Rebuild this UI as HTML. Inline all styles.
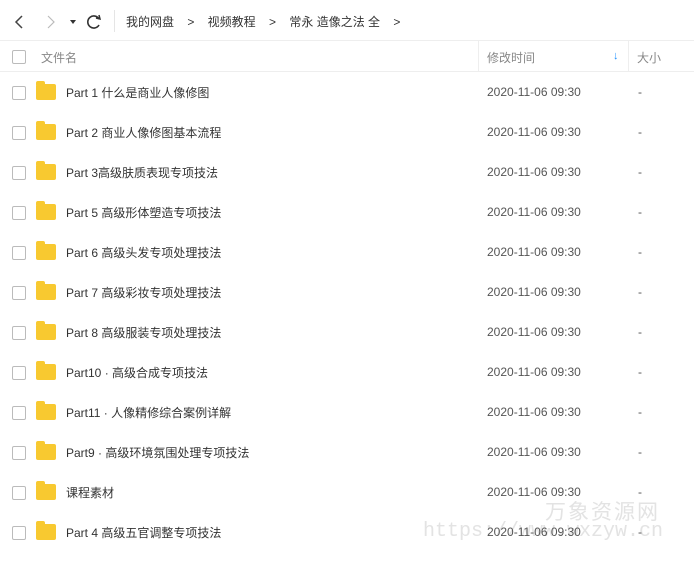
<!DOCTYPE html><html><head><meta charset="utf-8"><style>
body{margin:0;width:694px;height:566px;background:#fff;font-family:"Liberation Sans","Noto Sans CJK SC",sans-serif;position:relative;overflow:hidden;color:#333}
.a{position:absolute}
.cb{position:absolute;left:12px;width:12px;height:12px;border:1px solid #bbb;border-radius:2px;background:#fff}
.row{position:absolute;left:0;width:694px;height:40px}
.row .fd{position:absolute;left:36px;top:12px;width:20px;height:16px;background:#f8c930;border-radius:2px}
.row .fd:before{content:"";position:absolute;left:0;top:-3px;width:9px;height:4px;background:#f8c930;border-radius:2px 2px 0 0}
.row .n{position:absolute;left:66px;top:12px;font-size:12px;color:#333}
.row .t{position:absolute;left:487px;top:13px;font-size:12px;color:#555}
.row .s{position:absolute;left:638px;top:13px;font-size:12px;color:#555}
.row .cb{top:14px}
</style></head><body>
<div class="a" style="left:0;top:40px;width:694px;height:1px;background:#eee"></div>
<div class="a" style="left:0;top:71px;width:694px;height:1px;background:#eee"></div>
<svg class="a" style="left:12px;top:13px" width="90" height="18"><path d="M10 3 L4 9 L10 15" stroke="#444" stroke-width="1.5" fill="none"/><path d="M36 3 L42 9 L36 15" stroke="#bbb" stroke-width="1.2" fill="none"/><path d="M58 7 L64 7 L61 11Z" fill="#333"/><path d="M87 6 A6 6 0 1 0 87 12" stroke="#333" stroke-width="1.6" fill="none"/><path d="M84 5 L88 6 L87 2" stroke="#333" stroke-width="1.5" fill="none"/></svg>
<div class="a" style="left:114px;top:10px;width:1px;height:22px;background:#e5e5e5"></div>
<div class="a" style="left:126px;top:13px;font-size:12px;color:#333;white-space:pre">我的网盘    &gt;    视频教程    &gt;    常永 造像之法 全    &gt;</div>
<div class="cb" style="top:50px"></div>
<div class="a" style="left:41px;top:49px;font-size:12px;color:#888">文件名</div>
<div class="a" style="left:478px;top:41px;width:1px;height:30px;background:#eee"></div>
<div class="a" style="left:487px;top:49px;font-size:12px;color:#888">修改时间</div>
<div class="a" style="left:613px;top:50px;color:#1e90ff;font-size:11px;font-weight:bold">↓</div>
<div class="a" style="left:628px;top:41px;width:1px;height:30px;background:#eee"></div>
<div class="a" style="left:637px;top:49px;font-size:12px;color:#888">大小</div>
<div class="a" style="left:545px;top:496px;font-size:21px;color:#e3e3e3;letter-spacing:2px">万象资源网</div>
<div class="a" style="left:423px;top:520px;font-size:20px;color:#e3e3e3;font-family:'Liberation Mono',monospace">https://www.wxzyw.cn</div>
<div class="row" style="top:72px"><div class="cb"></div><div class="fd"></div><div class="n">Part 1 什么是商业人像修图</div><div class="t">2020-11-06 09:30</div><div class="s">-</div></div>
<div class="row" style="top:112px"><div class="cb"></div><div class="fd"></div><div class="n">Part 2 商业人像修图基本流程</div><div class="t">2020-11-06 09:30</div><div class="s">-</div></div>
<div class="row" style="top:152px"><div class="cb"></div><div class="fd"></div><div class="n">Part 3高级肤质表现专项技法</div><div class="t">2020-11-06 09:30</div><div class="s">-</div></div>
<div class="row" style="top:192px"><div class="cb"></div><div class="fd"></div><div class="n">Part 5 高级形体塑造专项技法</div><div class="t">2020-11-06 09:30</div><div class="s">-</div></div>
<div class="row" style="top:232px"><div class="cb"></div><div class="fd"></div><div class="n">Part 6 高级头发专项处理技法</div><div class="t">2020-11-06 09:30</div><div class="s">-</div></div>
<div class="row" style="top:272px"><div class="cb"></div><div class="fd"></div><div class="n">Part 7 高级彩妆专项处理技法</div><div class="t">2020-11-06 09:30</div><div class="s">-</div></div>
<div class="row" style="top:312px"><div class="cb"></div><div class="fd"></div><div class="n">Part 8 高级服装专项处理技法</div><div class="t">2020-11-06 09:30</div><div class="s">-</div></div>
<div class="row" style="top:352px"><div class="cb"></div><div class="fd"></div><div class="n">Part10 · 高级合成专项技法</div><div class="t">2020-11-06 09:30</div><div class="s">-</div></div>
<div class="row" style="top:392px"><div class="cb"></div><div class="fd"></div><div class="n">Part11 · 人像精修综合案例详解</div><div class="t">2020-11-06 09:30</div><div class="s">-</div></div>
<div class="row" style="top:432px"><div class="cb"></div><div class="fd"></div><div class="n">Part9 · 高级环境氛围处理专项技法</div><div class="t">2020-11-06 09:30</div><div class="s">-</div></div>
<div class="row" style="top:472px"><div class="cb"></div><div class="fd"></div><div class="n">课程素材</div><div class="t">2020-11-06 09:30</div><div class="s">-</div></div>
<div class="row" style="top:512px"><div class="cb"></div><div class="fd"></div><div class="n">Part 4 高级五官调整专项技法</div><div class="t">2020-11-06 09:30</div><div class="s">-</div></div>
</body></html>
